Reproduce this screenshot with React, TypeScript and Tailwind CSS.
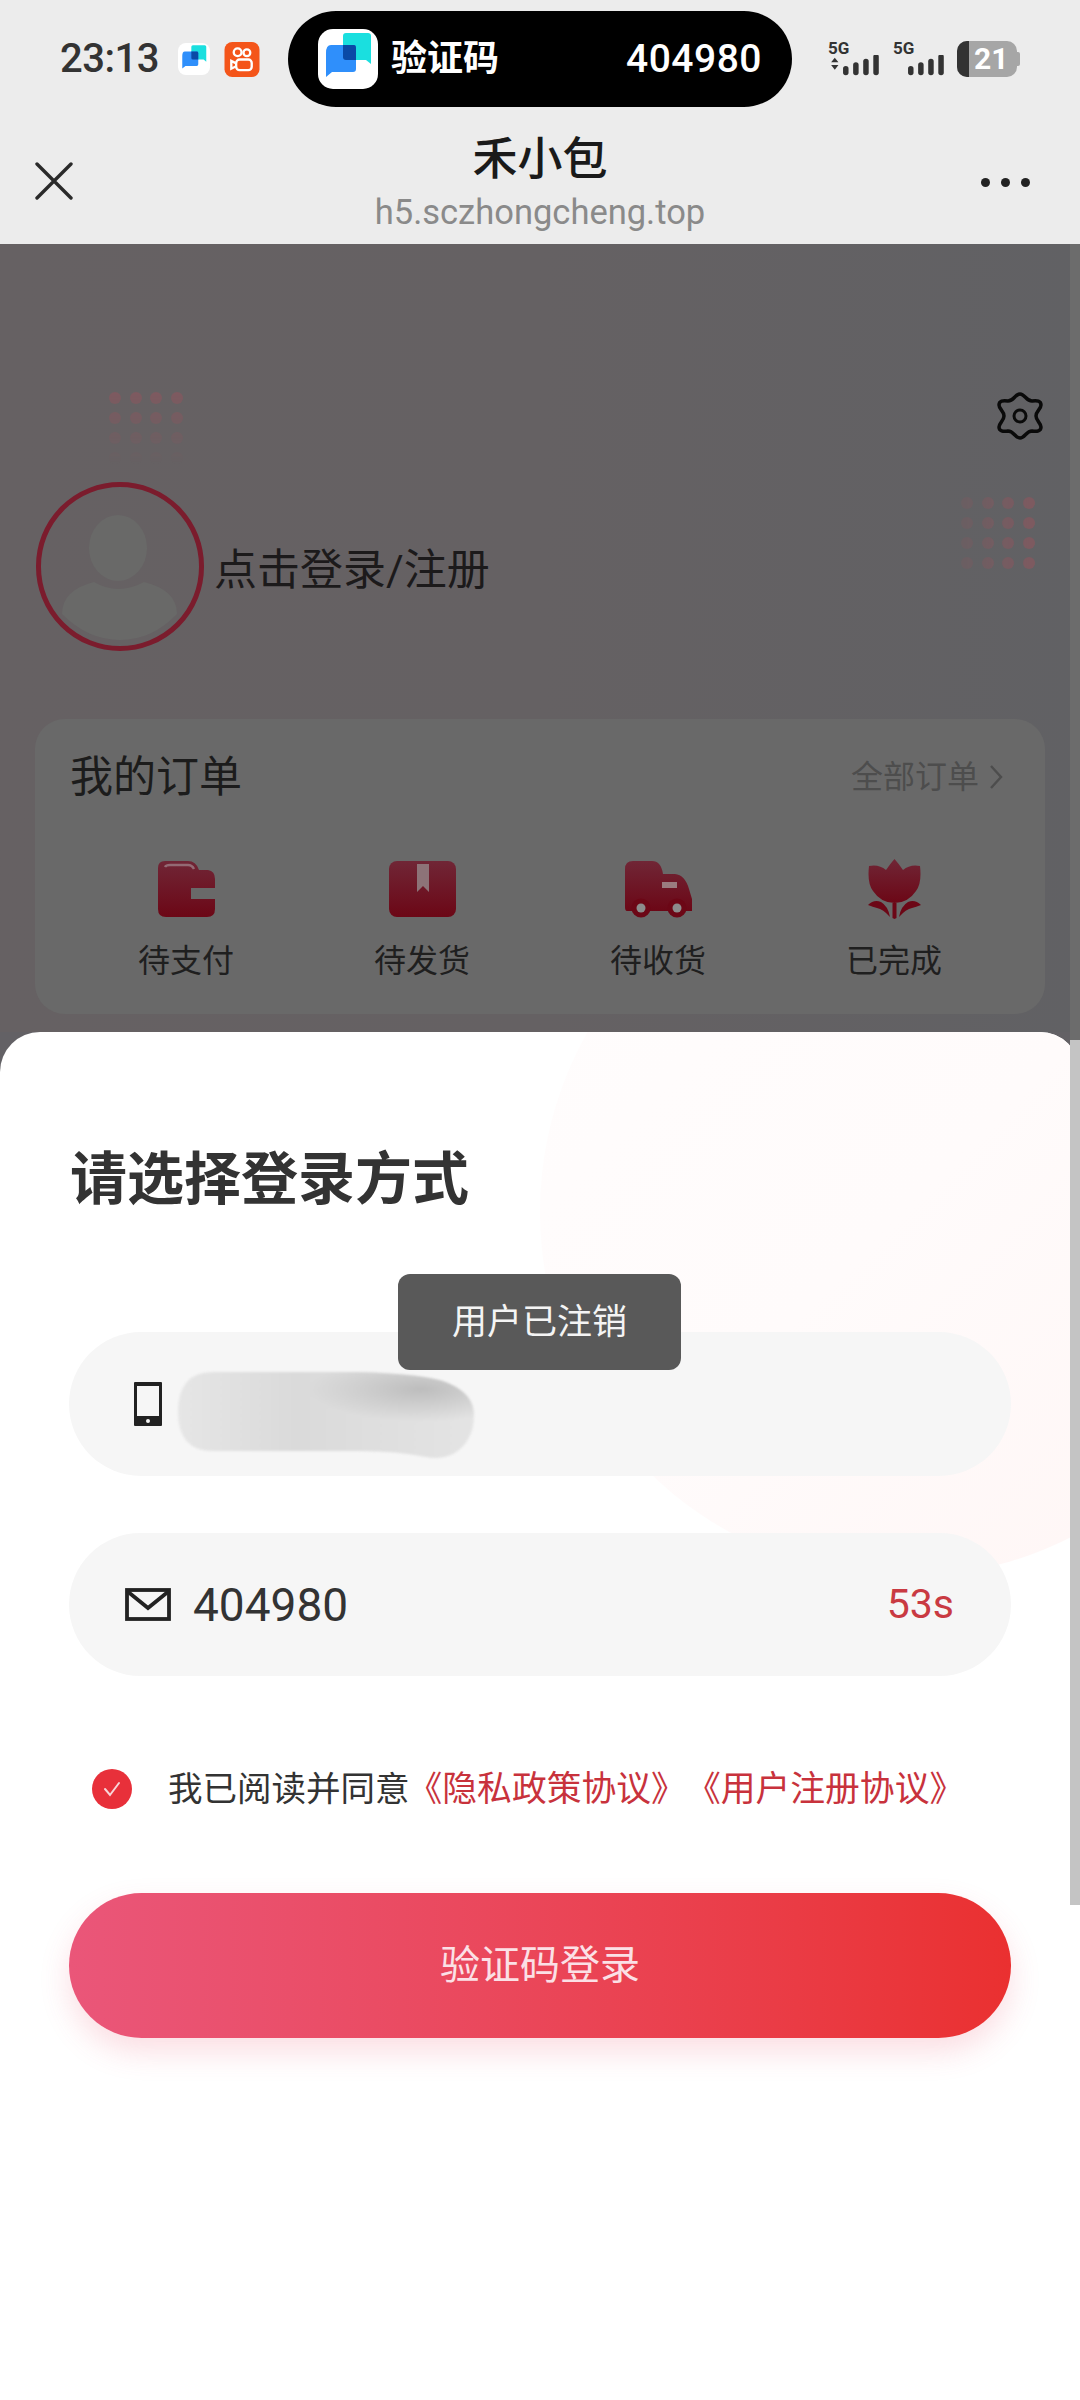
const ChatBubbles = ({ className }: { className: string }) => (
  <svg viewBox="0 0 60 60" className={className}>
    <rect width="60" height="60" rx="15" fill="#ffffff" />
    <path d="M25 7 Q25 4 28 4 H50 Q53 4 53 7 V35 L48 31 H28 Q25 31 25 28 Z" fill="#1adfdf" />
    <path d="M8 24 Q8 16 13 16 H36 Q38 16 38 19 V40 Q38 43 35 43 H14 L8 48 Z" fill="#2f8ffb" />
    <path d="M25 16 H36 Q38 16 38 19 V31 H28 Q25 31 25 28 Z" fill="#0a4aa6" />
  </svg>
);

const KuaiIcon = () => (
  <svg viewBox="0 0 36 36" className="h-[35px] w-[36px]">
    <rect width="36" height="36" rx="8" fill="#f4551a" />
    <g fill="none" stroke="#ffffff" strokeWidth="2.4">
      <circle cx="13.5" cy="10.5" r="4" />
      <circle cx="23" cy="11" r="3.5" />
      <rect x="12" y="18" width="16" height="11" rx="3.5" />
      <path d="M12 22 L7 19.5 V27.5 L12 25" />
    </g>
  </svg>
);

const SignalBars = ({ arrows }: { arrows?: boolean }) => (
  <div className="flex h-[36px] w-[53px] flex-col">
    <span className="h-[14px] text-[17px] leading-[14px] font-bold text-[#333333]">5G</span>
    <svg viewBox="0 0 53 24" className="h-[24px] w-[53px]">
      {arrows && <path d="M1 8 L5 3 L9 8 Z M1 11 H9 L5 16 Z" fill="#333333" />}
      <rect x="14" y="12" width="6" height="10" rx="3" fill="#333333" />
      <rect x="25" y="8" width="6" height="14" rx="3" fill="#333333" />
      <rect x="36" y="4" width="6" height="18" rx="3" fill="#333333" />
      <rect x="47" y="-1" width="6" height="23" rx="3" fill="#333333" />
    </svg>
  </div>
);

const CloseIcon = () => (
  <svg viewBox="0 0 38 38" className="h-[38px] w-[38px]">
    <path d="M2 2 L36 36 M36 2 L2 36" stroke="#2a2a2a" strokeWidth="3.4" strokeLinecap="round" />
  </svg>
);

const GearIcon = () => (
  <svg viewBox="0 0 46 50" fill="none" stroke="#0a0a0a" strokeWidth="3.5" className="h-[50px] w-[46px]">
    <path d="M23 3 C28 3 29 10 35 10 C40 9 44 10 44 14 C44 18 39 20 39 25 C39 30 44 32 44 36 C44 40 40 41 35 40 C29 40 28 47 23 47 C18 47 17 40 11 40 C6 41 2 40 2 36 C2 32 7 30 7 25 C7 20 2 18 2 14 C2 10 6 9 11 10 C17 10 18 3 23 3 Z" />
    <circle cx="23" cy="25" r="6" strokeWidth="3" />
  </svg>
);

const AvatarFigure = () => (
  <svg viewBox="0 0 156 157" className="h-full w-full">
    <ellipse cx="76" cy="60" rx="29" ry="33" fill="#696968" />
    <path d="M20 126 Q20 102 52 94 Q76 108 102 94 Q135 102 135 126 Q110 152 78 152 Q46 152 20 126 Z" fill="#696968" />
  </svg>
);

const IconGradient = ({ id }: { id: string }) => (
  <defs>
    <linearGradient id={id} x1="0" y1="0" x2="0" y2="1">
      <stop offset="0%" stopColor="#702636" />
      <stop offset="100%" stopColor="#6c0716" />
    </linearGradient>
  </defs>
);

const WalletIcon = () => (
  <svg viewBox="0 0 57 56" className="h-[56px] w-[57px]">
    <IconGradient id="walletFill" />
    <path d="M7 0 H30 Q38 0 41 9 H50 Q57 10 57 18 V27 H33 V38 H57 V48 Q57 56 49 56 H8 Q0 56 0 48 V7 Q0 0 7 0 Z" fill="url(#walletFill)" />
    <path d="M7 6 Q8 4 12 4 H30 Q34 4 36 8" fill="none" stroke="#936a74" strokeWidth="2.4" />
  </svg>
);

const BookIcon = () => (
  <svg viewBox="0 0 67 56" className="h-[56px] w-[67px]">
    <IconGradient id="bookFill" />
    <rect width="67" height="56" rx="8" fill="url(#bookFill)" />
    <path d="M28 3 H40 V31 L34 25 L28 31 Z" fill="#8d7378" />
  </svg>
);

const TruckIcon = () => (
  <svg viewBox="0 0 67 57" className="h-[57px] w-[67px]">
    <IconGradient id="truckFill" />
    <path d="M0 8 Q0 0 8 0 H27 Q36 0 38 13 H50 Q60 14 64 28 L67 38 V50 H60 H7 H2 Q0 50 0 46 Z" fill="url(#truckFill)" />
    <circle cx="16" cy="47" r="9.5" fill="#6c0716" />
    <circle cx="52" cy="47" r="9.5" fill="#6c0716" />
    <circle cx="16" cy="47" r="4.5" fill="#8c8c8c" />
    <circle cx="52" cy="47" r="4.5" fill="#8c8c8c" />
    <rect x="37" y="21" width="15" height="6" fill="#9a7c80" />
  </svg>
);

const TulipIcon = () => (
  <svg viewBox="0 0 53 60" className="h-[60px] w-[53px]">
    <IconGradient id="tulipFill" />
    <path d="M26.5 0 Q31 5 35 11 Q42 5 52 7 Q54 24 48 32 Q40 44 26.5 44 Q13 44 5 32 Q-1 24 1 7 Q11 5 18 11 Q22 5 26.5 0 Z" fill="url(#tulipFill)" />
    <path d="M24.5 44 H28.5 V59 L26.5 60 L24.5 59 Z" fill="#6c0716" />
    <path d="M0 46 Q6 40 13 43 Q20 47 22 58 Q15 50 9 49 Q5 48 0 46 Z" fill="#6c0716" />
    <path d="M53 46 Q47 40 40 43 Q33 47 31 58 Q38 50 44 49 Q48 48 53 46 Z" fill="#6c0716" />
  </svg>
);

const PhoneIcon = () => (
  <svg viewBox="0 0 28 44" className="h-[44px] w-[28px]">
    <rect width="28" height="44" rx="1" fill="#222222" />
    <rect x="3" y="4" width="22" height="30" fill="#f6f6f6" />
    <circle cx="14" cy="39" r="2" fill="#f6f6f6" />
  </svg>
);

const MailIcon = () => (
  <svg viewBox="0 0 46 33" fill="none" stroke="#222222" strokeWidth="3.8" className="h-[33px] w-[46px]">
    <rect x="2" y="2" width="42" height="29" />
    <path d="M2 3 L23 20 L44 3" />
  </svg>
);

const Smear = () => (
  <svg viewBox="0 0 296 88" className="h-[88px] w-[296px] blur-[1px]">
    <defs>
      <linearGradient id="smearBase" x1="0" y1="0" x2="1" y2="0">
        <stop offset="0%" stopColor="#e6e6e6" />
        <stop offset="40%" stopColor="#dadada" />
        <stop offset="100%" stopColor="#e4e4e4" />
      </linearGradient>
      <radialGradient id="smearDark" cx="0.82" cy="0.2" r="0.38">
        <stop offset="0%" stopColor="#bdbdbd" />
        <stop offset="100%" stopColor="#bdbdbd" stopOpacity="0" />
      </radialGradient>
    </defs>
    <path d="M35 0 H180 Q250 2 270 11 Q296 22 296 43 Q296 70 275 82 Q262 88 248 85 Q220 79 180 79 H35 Q0 79 0 40 Q0 0 35 0 Z" fill="url(#smearBase)" />
    <path d="M35 0 H180 Q250 2 270 11 Q296 22 296 43 Q296 70 275 82 Q262 88 248 85 Q220 79 180 79 H35 Q0 79 0 40 Q0 0 35 0 Z" fill="url(#smearDark)" />
  </svg>
);

const CheckMark = () => (
  <svg viewBox="0 0 40 40" className="h-[40px] w-[40px]">
    <circle cx="20" cy="20" r="20" fill="#e8303a" />
    <path d="M13 20 L18 26 L27 14" fill="none" stroke="#f8d5d8" strokeWidth="2" strokeLinecap="round" />
  </svg>
);

const DotGrid = ({ className }: { className: string }) => (
  <div className={`grid grid-cols-4 gap-x-[8.5px] gap-y-[8px] ${className}`}>
    {Array(16)
      .fill(0)
      .map((_, index) => (
        <span key={index} className="h-[12px] w-[12px] rounded-full bg-[#7e5a60]" />
      ))}
  </div>
);

const orders = [
  { label: "待支付", icon: <WalletIcon /> },
  { label: "待发货", icon: <BookIcon /> },
  { label: "待收货", icon: <TruckIcon /> },
  { label: "已完成", icon: <TulipIcon /> },
];

export default function App() {
  return (
    <div className="relative flex h-[2400px] w-[1080px] flex-col overflow-hidden bg-[#636165] font-['Roboto','Noto_Sans_CJK_SC',sans-serif]">
      <div className="h-[244px] bg-[#ececec]">
        <div className="flex h-[116px] items-center pt-[2px]">
          <span className="ml-[60px] w-[104px] text-[40px] leading-none font-medium tracking-[-0.5px] text-[#333333]">23:13</span>
          <ChatBubbles className="ml-[14px] h-[34px] w-[32px]" />
          <div className="ml-[14px]">
            <KuaiIcon />
          </div>
          <div className="ml-[28px] flex h-[96px] w-[504px] items-center rounded-full bg-black pr-[30px] pl-[30px]">
            <ChatBubbles className="h-[60px] w-[60px]" />
            <span className="ml-[13px] text-[36px] font-bold text-white">验证码</span>
            <span className="ml-auto text-[39px] font-medium tracking-[0.5px] text-white">404980</span>
          </div>
          <div className="ml-[36px] flex items-center gap-[12px]">
            <SignalBars arrows />
            <SignalBars />
          </div>
          <div className="ml-[11px] flex items-center">
            <div className="flex h-[36px] w-[60px] items-center overflow-hidden rounded-[10px] bg-[#a6a6a6]">
              <div className="h-full w-[12px] bg-[#333333]" />
              <span className="ml-[5px] text-[30px] leading-none font-bold text-white">21</span>
            </div>
            <div className="h-[14px] w-[3px] rounded-r-[2px] bg-[#a6a6a6]" />
          </div>
        </div>
        <div className="relative flex h-[128px] items-center justify-between pr-[50px] pl-[35px]">
          <div className="pt-[2px]">
            <CloseIcon />
          </div>
          <div className="absolute inset-x-0 top-0 flex flex-col items-center">
            <span className="mt-[17px] text-[45px] leading-[54px] font-medium text-[#1a1a1a]">禾小包</span>
            <span className="mt-[6px] text-[34.5px] leading-[38px] text-[#8a8a8a]">h5.sczhongcheng.top</span>
          </div>
          <div className="flex gap-[11px] pt-[4px]">
            <span className="h-[9px] w-[9px] rounded-full bg-[#222222]" />
            <span className="h-[9px] w-[9px] rounded-full bg-[#222222]" />
            <span className="h-[9px] w-[9px] rounded-full bg-[#222222]" />
          </div>
        </div>
      </div>

      <div className="relative h-[788px] bg-gradient-to-r from-[#666163] via-[#656163] to-[#616164]">
        <DotGrid className="absolute top-[148px] left-[109px] [mask-image:linear-gradient(to_bottom,black,transparent)]" />
        <DotGrid className="absolute top-[253px] left-[961px] [mask-image:linear-gradient(to_left,black,rgba(0,0,0,0.3))]" />
        <div className="flex justify-end pt-[147px] pr-[37px]">
          <GearIcon />
        </div>
        <div className="mt-[41px] flex items-center pl-[36px]">
          <div className="h-[169px] w-[168px] rounded-full border-[5px] border-[#7b1c2d] p-[1px]">
            <AvatarFigure />
          </div>
          <span className="ml-[10px] pt-[8px] text-[43px] leading-none text-[#1c1a1b]">点击登录/注册</span>
        </div>
        <div className="mx-[35px] mt-[68px] h-[295px] rounded-[30px] bg-[#696969]">
          <div className="flex items-center justify-between pt-[32px] pr-[42px] pl-[35px]">
            <span className="text-[43px] leading-[52px] text-[#1c1c1c]">我的订单</span>
            <div className="flex items-center gap-[10px]">
              <span className="text-[32px] text-[#4d4d4d]">全部订单</span>
              <svg viewBox="0 0 14 26" className="h-[26px] w-[14px]">
                <path d="M2 2 L12 13 L2 24" fill="none" stroke="#4d4d4d" strokeWidth="2.4" />
              </svg>
            </div>
          </div>
          <div className="mt-[56px] grid grid-cols-4 px-[33px]">
            {orders.map((order) => (
              <div key={order.label} className="flex flex-col items-center">
                <div className="flex h-[60px] items-center">{order.icon}</div>
                <span className="mt-[18px] text-[32px] leading-[48px] text-[#1f1f1f]">{order.label}</span>
              </div>
            ))}
          </div>
        </div>
      </div>

      <div className="absolute top-[244px] right-0 h-[800px] w-[10px] bg-[#6c6c6c]" />

      <div className="relative flex-1 overflow-hidden rounded-t-[40px] bg-white">
        <div className="absolute top-[-185px] left-[540px] h-[730px] w-[730px] rounded-full bg-gradient-to-br from-[#fffdfd] via-[#fffbfb] to-[#fff5f4]" />
        <div className="relative pt-[118px]">
          <h1 className="ml-[70px] text-[57px] leading-[60px] font-bold text-[#333333]">请选择登录方式</h1>
          <div className="relative mx-[69px] mt-[122px] flex h-[144px] items-center rounded-full bg-[#f6f6f6] pl-[65px]">
            <PhoneIcon />
            <div className="absolute top-[40px] left-[109px]">
              <Smear />
            </div>
          </div>
          <div className="mx-[69px] mt-[57px] flex h-[143px] items-center rounded-full bg-[#f6f6f6] pr-[57px] pl-[56px]">
            <MailIcon />
            <span className="ml-[22px] pt-[2px] text-[46px] text-[#333333]">404980</span>
            <span className="ml-auto text-[41px] text-[#c93a42]">53s</span>
          </div>
          <div className="mt-[93px] flex h-[40px] items-center pl-[92px]">
            <CheckMark />
            <span className="ml-[36px] text-[34.5px] leading-none whitespace-nowrap text-[#333333]">我已阅读并同意</span>
            <span className="ml-[-2px] text-[34.8px] leading-none whitespace-nowrap text-[#c8323c] [text-spacing-trim:space-all]">《隐私政策协议》《用户注册协议》</span>
          </div>
          <button className="mx-[69px] mt-[84px] flex h-[145px] w-[942px] items-center justify-center rounded-full bg-gradient-to-r from-[#ea5679] to-[#ea3030] text-[40px] text-[#fbe0e6] shadow-[0_14px_30px_rgba(234,70,100,0.18)]">
            验证码登录
          </button>
        </div>
        <div className="absolute top-[242px] left-[398px] flex h-[96px] w-[283px] items-center justify-center rounded-[12px] bg-[#595959] pt-[3px] text-[35px] text-[#f4f4f4]">
          用户已注销
        </div>
      </div>

      <div className="absolute top-[1040px] right-0 h-[865px] w-[10px] bg-[#c4c4c4]" />
    </div>
  );
}
